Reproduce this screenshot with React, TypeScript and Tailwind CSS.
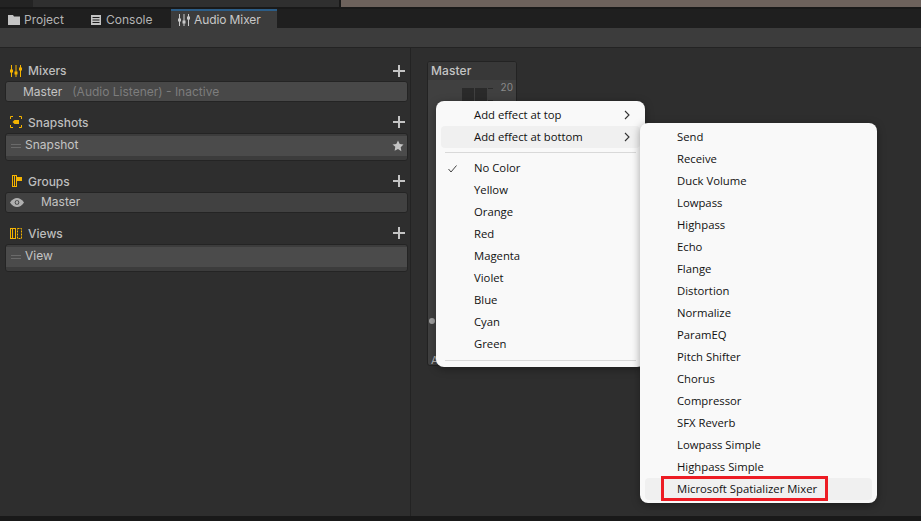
import React from "react";

const Plus = () => (
  <svg width="12" height="12" viewBox="0 0 12 12" className="shrink-0">
    <path d="M6 0v12M0 6h12" stroke="#c4c4c4" strokeWidth="2" />
  </svg>
);

const Grip = () => (
  <svg width="10" height="5" viewBox="0 0 10 5" className="shrink-0">
    <path d="M0 .5h10M0 3.5h10" stroke="#6a6a6a" strokeWidth="1" />
  </svg>
);

const MixIcon = ({ color }: { color: string }) => (
  <svg width="12" height="12" viewBox="0 0 12 12" className="shrink-0">
    <g stroke={color} strokeWidth="1" fill={color}>
      <path d="M1.500 0v12M6 0v12M10.500 0v12" fill="none" />
      <rect x="0.500" y="5" width="2" height="2" />
      <rect x="5" y="7" width="2" height="2" />
      <rect x="9.500" y="3" width="2" height="2" />
    </g>
  </svg>
);

const SnapIcon = () => (
  <svg width="12" height="12" viewBox="0 0 12 12" className="shrink-0">
    <path d="M3 .5H.5V3M9 .5h2.500V3M3 11.500H.5V9M9 11.500h2.500V9" stroke="#f5b400" fill="none" />
    <path d="M2.500 6l2-2H9v4H4.500z" fill="#f5b400" />
  </svg>
);

const GroupIcon = () => (
  <svg width="10" height="12" viewBox="0 0 10 12" className="shrink-0 ml-[2px]">
    <rect x="0.500" y="0.500" width="4" height="11" fill="none" stroke="#f5b400" />
    <path d="M2.500 1v10" stroke="#f5b400" />
    <rect x="5" y="2" width="5" height="4" fill="#f5b400" />
  </svg>
);

const ViewIcon = () => (
  <svg width="12" height="11" viewBox="0 0 12 11" className="shrink-0">
    <rect x="0.500" y="0.500" width="5" height="10" fill="none" stroke="#f5b400" />
    <path d="M2.500 1v9" stroke="#f5b400" />
    <rect x="7.500" y="0.500" width="4" height="10" fill="none" stroke="#f5b400" strokeDasharray="2 1" />
  </svg>
);

const Header = ({ icon, title, className, titleClass }: { icon: React.ReactNode; title: string; className: string; titleClass?: string }) => (
  <div className={`flex items-center pl-[9px] pr-[5px] h-[16px] ${className}`}>
    <span className="w-[18px] flex items-center">{icon}</span>
    <span className={`text-[12px] font-medium text-[#bdbdbd] ${titleClass ?? ""}`}>{title}</span>
    <span className="ml-auto flex"><Plus /></span>
  </div>
);

const Chevron = () => (
  <svg width="6" height="10" viewBox="0 0 6 10" className="ml-auto mr-[10px]">
    <path d="M1 1l4 4-4 4" stroke="#333" strokeWidth="1.100" fill="none" />
  </svg>
);

const MenuItem = ({ label, hot, check, chevron, pad }: { label: string; hot?: boolean; check?: boolean; chevron?: boolean; pad: string }) => (
  <div className={`flex items-center h-[22px] mx-[5px] rounded-[4px] ${pad} ${hot ? "bg-[#f0f0f0]" : ""} relative`}>
    {check && (
      <svg width="9" height="8" viewBox="0 0 9 8" className="absolute left-[7px] top-[8px]">
        <path d="M.5 4l2.500 3L8.500 .5" stroke="#444" strokeWidth="1" fill="none" />
      </svg>
    )}
    <span className="text-[11.3px] text-[#111] whitespace-nowrap">{label}</span>
    {chevron && <Chevron />}
  </div>
);

const effects = [
  "Send", "Receive", "Duck Volume", "Lowpass", "Highpass", "Echo", "Flange", "Distortion", "Normalize",
  "ParamEQ", "Pitch Shifter", "Chorus", "Compressor", "SFX Reverb", "Lowpass Simple", "Highpass Simple",
];
const colors = ["Yellow", "Orange", "Red", "Magenta", "Violet", "Blue", "Cyan", "Green"];

export default function App() {
  return (
    <div className="w-[921px] h-[521px] overflow-hidden relative flex flex-col bg-[#1d1d1d] font-['Inter','Liberation_Sans',sans-serif]">
      {/* top strip */}
      <div className="h-[9px] flex shrink-0 bg-[#191919]">
        <div className="w-[33px] h-[7px] bg-[#232323]" />
        <div className="w-[306px] h-[7px] bg-[#2f2f2f]" />
        <div className="w-[2px]" />
        <div className="flex-1 h-[7px] bg-[#6d625c]" />
      </div>

      {/* tabs */}
      <div className="h-[19px] shrink-0 flex bg-[#1f1f1f] text-[12px] text-[#b4b4b4]">
        <div className="w-[84px] flex items-center pl-[8px] gap-[4px] pt-[2px]">
          <svg width="12" height="10" viewBox="0 0 12 10"><path d="M0 0h5l1 1.500h6V10H0z" fill="#c4c4c4" /></svg>
          <span>Project</span>
        </div>
        <div className="w-[87px] flex items-center pl-[7px] gap-[5px] pt-[2px]">
          <svg width="10" height="10" viewBox="0 0 10 10">
            <rect width="10" height="10" fill="#c4c4c4" />
            <path d="M1.500 2.500h7M1.500 5h7M1.500 7.500h7" stroke="#1f1f1f" />
          </svg>
          <span>Console</span>
        </div>
        <div className="w-[106px] flex items-center pl-[7px] gap-[4px] bg-[#3c3c3c] border-t-2 border-[#2c5d87] text-[#c8c8c8] tracking-[-0.1px]">
          <MixIcon color="#c8c8c8" />
          <span>Audio Mixer</span>
        </div>
      </div>

      {/* toolbar */}
      <div className="h-[20px] shrink-0 bg-[#3c3c3c] border-b border-[#232323]" />

      {/* body */}
      <div className="flex-1 flex bg-[#2e2e2e] min-h-0">
        <div className="w-[411px] shrink-0 border-r border-[#232323] pl-[1px]">
          <Header icon={<MixIcon color="#f5b400" />} title="Mixers" className="mt-[15px]" />
          <div className="ml-[4px] mr-[2px] mt-[2px] h-[21px] rounded-[3px] bg-[#484848] border border-[#242424] flex items-center pl-[17px] text-[12px]">
            <span className="text-[#c4c4c4]">Master</span>
            <span className="text-[#7d7d7d] ml-[10px]">(Audio Listener) - Inactive</span>
          </div>

          <Header icon={<SnapIcon />} title="Snapshots" className="mt-[12px]" titleClass="mt-[2px]" />
          <div className="ml-[4px] mr-[2px] mt-[3px] h-[28px] rounded-[3px] bg-[#3c3c3c] border border-[#242424] pt-[2px]">
            <div className="h-[20px] bg-[#4b4b4b] flex items-center pl-[5px] pr-[3px] gap-[4px] text-[12px] text-[#c4c4c4]">
              <Grip /><span className="mt-[-3px]">Snapshot</span>
              <svg width="12" height="12" viewBox="0 0 24 24" className="ml-auto">
                <path d="M12 1l3.400 7.200 7.600 1-5.600 5.400 1.400 7.900L12 17.800 5.200 21.500l1.400-7.900L1 9.200l7.600-1z" fill="#c4c4c4" />
              </svg>
            </div>
          </div>

          <Header icon={<GroupIcon />} title="Groups" className="mt-[12px]" titleClass="mt-[2px]" />
          <div className="ml-[4px] mr-[2px] mt-[3px] h-[21px] rounded-[3px] bg-[#414141] border border-[#242424] flex items-center pl-[4px] text-[12px] text-[#c4c4c4]">
            <svg width="14" height="9" viewBox="0 0 14 9" className="shrink-0">
              <path d="M0 4.500C2 1.500 4.500 0 7 0s5 1.500 7 4.500C12 7.500 9.500 9 7 9S2 7.500 0 4.500z" fill="#b0b0b0" />
              <circle cx="7" cy="4.500" r="2.300" fill="#414141" />
              <circle cx="7" cy="4.500" r="1.400" fill="#b0b0b0" />
            </svg>
            <span className="ml-[17px] mt-[-1px]">Master</span>
          </div>

          <Header icon={<ViewIcon />} title="Views" className="mt-[12px]" titleClass="mt-[2px]" />
          <div className="ml-[4px] mr-[2px] mt-[3px] h-[28px] rounded-[3px] bg-[#3c3c3c] border border-[#242424] pt-[2px]">
            <div className="h-[20px] bg-[#4b4b4b] flex items-center pl-[5px] gap-[4px] text-[12px] text-[#c4c4c4]">
              <Grip /><span className="mt-[-3px]">View</span>
            </div>
          </div>
        </div>
        <div className="flex-1" />
      </div>

      <div className="h-[5px] shrink-0 bg-[#191919]" />

      {/* mixer strip on the canvas */}
      <div className="absolute left-[427px] top-[61px] w-[90px] h-[305px] rounded-[3px] bg-[#404040] border border-[#232323] overflow-hidden">
        <div className="h-[18px] bg-[#383838] flex items-center pl-[3px] text-[12px] font-medium text-[#c4c4c4] tracking-[0.1px]">Master</div>
        <div className="absolute left-[34px] top-[26px] w-[12px] h-[40px] bg-[#2a2a2a]" />
        <div className="absolute left-[47px] top-[26px] w-[12px] h-[40px] bg-[#2a2a2a]" />
        <div className="absolute left-[60px] top-[26px] w-[5px] h-px bg-[#2a2a2a]" />
        <div className="absolute left-[60px] top-[38px] w-[5px] h-px bg-[#2a2a2a]" />
        <div className="absolute right-[3px] top-[18px] text-[10px] text-[#8a8a8a]">20</div>
        <div className="absolute left-[1px] top-[256px] w-[6px] h-[6px] rounded-full bg-[#a0a0a0]" />
        <div className="absolute left-[3px] top-[290px] text-[11px] text-[#b4b4b4]">A</div>
      </div>

      {/* first menu */}
      <div className="absolute left-[436px] top-[101px] w-[209px] h-[266px] rounded-[8px] bg-[#f9f9f9] shadow-[0_2px_8px_rgba(0,0,0,0.35)] pt-[3px] font-['Open_Sans','Noto_Sans',sans-serif]">
        <MenuItem pad="pl-[33px]" label="Add effect at top" chevron />
        <MenuItem pad="pl-[33px]" label="Add effect at bottom" hot chevron />
        <div className="h-px bg-[#d9d9d9] mx-[9px] mt-[4px] mb-[4px]" />
        <MenuItem pad="pl-[33px]" label="No Color" check />
        {colors.map((c) => <MenuItem pad="pl-[33px]" key={c} label={c} />)}
        <div className="h-px bg-[#d9d9d9] mx-[9px] mt-[5px]" />
      </div>

      {/* submenu */}
      <div className="absolute left-[640px] top-[123px] w-[237px] h-[380px] rounded-[8px] bg-[#f9f9f9] shadow-[0_2px_8px_rgba(0,0,0,0.35)] pt-[3px] font-['Open_Sans','Noto_Sans',sans-serif]">
        {effects.map((e) => <MenuItem pad="pl-[32px]" key={e} label={e} />)}
        <MenuItem pad="pl-[32px]" label="Microsoft Spatializer Mixer" hot />
        <div className="absolute left-[21px] top-[353px] w-[167px] h-[25px] border-[3px] border-[#ed1c24]" />
      </div>
    </div>
  );
}
